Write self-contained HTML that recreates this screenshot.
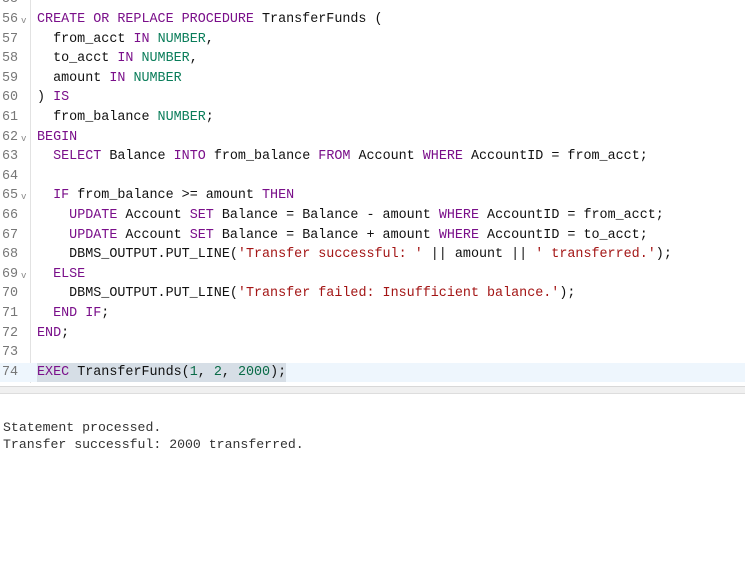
<!DOCTYPE html>
<html><head><style>
body{margin:0;width:745px;height:561px;background:#fff;overflow:hidden;position:relative;font-family:"Liberation Mono",monospace;font-size:13.4px;}
.ed{position:absolute;left:0;top:-9.6px;width:745px;}
.l{height:19.6px;line-height:19.6px;white-space:pre;position:relative;}
.n{position:absolute;left:2px;color:#777;width:26px;}
.f{position:absolute;left:21px;top:2px;color:#888;font-size:9px;}
.c{position:absolute;left:37px;color:#111;}
.k{color:#7a0f8a}.t{color:#0a7d5a}.s{color:#a31515}.d{color:#096b47}
.gut{position:absolute;left:30px;top:0;width:1px;height:383px;background:#e2e2e2;}
.hl{background:#eef6fd;}
.sel{background:#d6dee6;}
.sep{position:absolute;left:0;top:386px;width:745px;height:1px;background:#d8d8d8;}
.sep2{position:absolute;left:0;top:387px;width:745px;height:6px;background:#f0f0f0;border-bottom:1px solid #ddd;}
.out{position:absolute;left:3px;top:419px;line-height:17px;color:#333;white-space:pre;font-size:13.2px;}
</style></head><body>
<div class="gut"></div>
<div class="ed">
<div class="l"><span class="n">55</span></div>
<div class="l"><span class="n">56</span><span class="f">v</span><span class="c"><span class="k">CREATE OR REPLACE PROCEDURE</span> TransferFunds (</span></div>
<div class="l"><span class="n">57</span><span class="c">  from_acct <span class="k">IN</span> <span class="t">NUMBER</span>,</span></div>
<div class="l"><span class="n">58</span><span class="c">  to_acct <span class="k">IN</span> <span class="t">NUMBER</span>,</span></div>
<div class="l"><span class="n">59</span><span class="c">  amount <span class="k">IN</span> <span class="t">NUMBER</span></span></div>
<div class="l"><span class="n">60</span><span class="c">) <span class="k">IS</span></span></div>
<div class="l"><span class="n">61</span><span class="c">  from_balance <span class="t">NUMBER</span>;</span></div>
<div class="l"><span class="n">62</span><span class="f">v</span><span class="c"><span class="k">BEGIN</span></span></div>
<div class="l"><span class="n">63</span><span class="c">  <span class="k">SELECT</span> Balance <span class="k">INTO</span> from_balance <span class="k">FROM</span> Account <span class="k">WHERE</span> AccountID = from_acct;</span></div>
<div class="l"><span class="n">64</span></div>
<div class="l"><span class="n">65</span><span class="f">v</span><span class="c">  <span class="k">IF</span> from_balance &gt;= amount <span class="k">THEN</span></span></div>
<div class="l"><span class="n">66</span><span class="c">    <span class="k">UPDATE</span> Account <span class="k">SET</span> Balance = Balance - amount <span class="k">WHERE</span> AccountID = from_acct;</span></div>
<div class="l"><span class="n">67</span><span class="c">    <span class="k">UPDATE</span> Account <span class="k">SET</span> Balance = Balance + amount <span class="k">WHERE</span> AccountID = to_acct;</span></div>
<div class="l"><span class="n">68</span><span class="c">    DBMS_OUTPUT.PUT_LINE(<span class="s">'Transfer successful: '</span> || amount || <span class="s">' transferred.'</span>);</span></div>
<div class="l"><span class="n">69</span><span class="f">v</span><span class="c">  <span class="k">ELSE</span></span></div>
<div class="l"><span class="n">70</span><span class="c">    DBMS_OUTPUT.PUT_LINE(<span class="s">'Transfer failed: Insufficient balance.'</span>);</span></div>
<div class="l"><span class="n">71</span><span class="c">  <span class="k">END IF</span>;</span></div>
<div class="l"><span class="n">72</span><span class="c"><span class="k">END</span>;</span></div>
<div class="l"><span class="n">73</span></div>
<div class="l hl"><span class="n">74</span><span class="c sel"><span class="k">EXEC</span> TransferFunds(<span class="d">1</span>, <span class="d">2</span>, <span class="d">2000</span>);</span></div>
</div>
<div class="sep"></div><div class="sep2"></div>
<div class="out">Statement processed.
Transfer successful: 2000 transferred.</div>
</body></html>
